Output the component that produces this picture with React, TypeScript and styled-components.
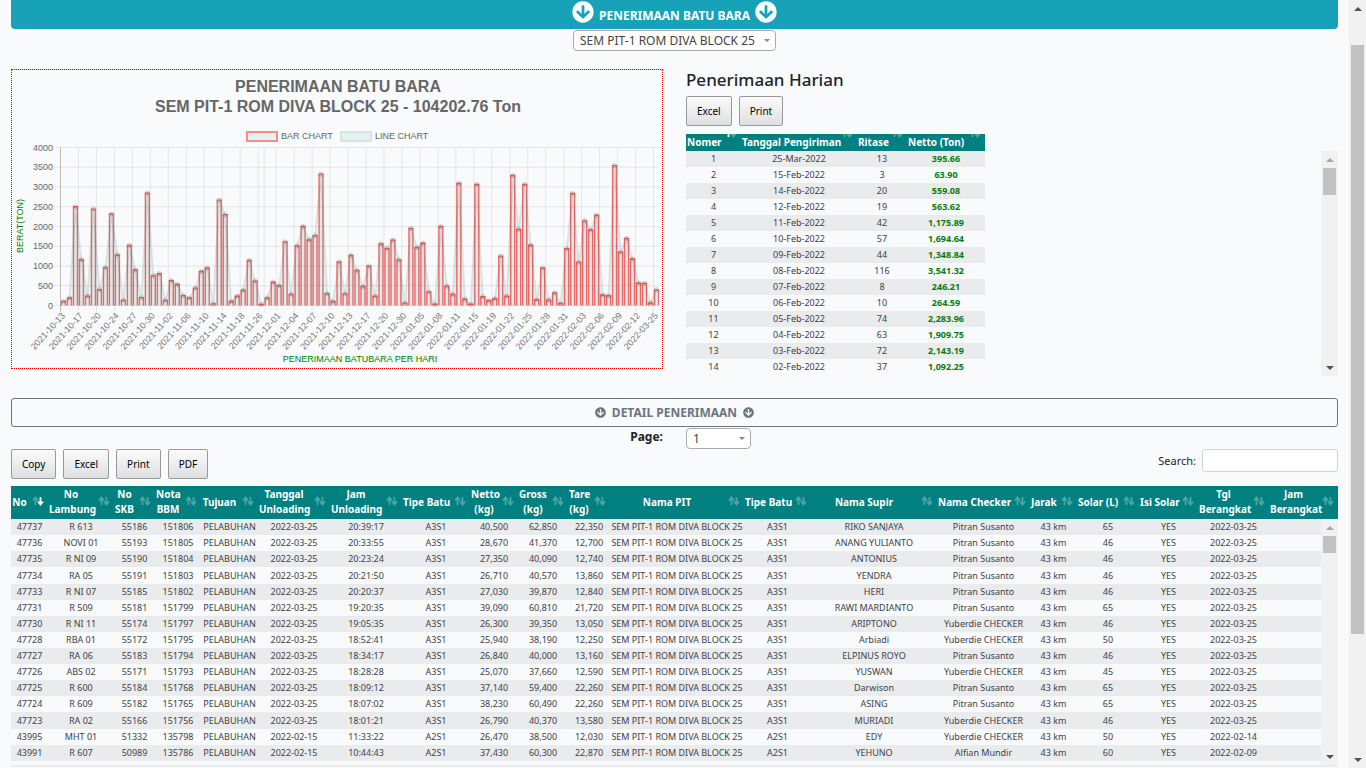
import React from "react";
import styled, { createGlobalStyle, css } from "styled-components";
import { FaArrowCircleDown } from "react-icons/fa";

const TEAL = "#008080";
const PAGE_BG = "#f8fafc";
const UI_FONT = '"Noto Sans", "Open Sans", sans-serif';

const GlobalStyle = createGlobalStyle`
  * { box-sizing: border-box; }
  body {
    margin: 0;
    background: ${PAGE_BG};
    color: #212529;
    font-family: ${UI_FONT};
    font-size: 12px;
  }
  button, input, select { font-family: inherit; margin: 0; }
`;

const Shell = styled.div`
  display: flex;
  height: 100vh;
  overflow: hidden;
`;

const Main = styled.main`
  flex: 1;
  min-width: 0;
  display: flex;
  flex-direction: column;
  padding: 0 11px;
`;

const Banner = styled.header`
  display: flex;
  align-items: flex-start;
  justify-content: center;
  gap: 5px;
  height: 29px;
  padding-top: 1px;
  background: #17a2b8;
  color: #fff;
  border-radius: 0 0 4px 4px;
  svg { width: 22px; height: 22px; }
`;

const BannerTitle = styled.h1`
  margin: 0;
  padding-top: 6px;
  font-size: 12px;
  line-height: 18px;
  font-weight: 700;
`;

const CenterRow = styled.div`
  display: flex;
  justify-content: center;
  padding-top: 1px;
`;

const SelectBox = styled.div<{ $width: number }>`
  position: relative;
  width: ${(p) => p.$width}px;
  height: 21px;
  &::after {
    content: "";
    position: absolute;
    right: 6px;
    top: 9px;
    border: 3px solid transparent;
    border-top-color: #888;
    border-bottom-width: 0;
    pointer-events: none;
  }
`;

const Select = styled.select`
  appearance: none;
  width: 100%;
  height: 100%;
  padding: 0 18px 0 6px;
  border: 1px solid #aaa;
  border-radius: 4px;
  background: #fff;
  color: #444;
  font-size: 12px;
`;

const Columns = styled.section`
  display: grid;
  grid-template-columns: 1fr 1fr;
  gap: 23px;
  margin-top: 18px;
`;

const ChartFrame = styled.div`
  border: 1px dotted #f00;
  align-self: start;
  svg { display: block; width: 100%; height: auto; }
`;

const DailyTitle = styled.h2`
  margin: 0 0 5px;
  font-size: 17px;
  line-height: 22px;
  font-weight: 500;
`;

const ButtonRow = styled.div`
  display: flex;
  gap: 7px;
`;

const ToolButton = styled.button`
  height: 30px;
  padding: 0 10px;
  border: 1px solid #999;
  border-radius: 2px;
  background: linear-gradient(#fbfbfc, #dedfe1);
  color: #000;
  font-size: 10px;
`;

const DailyArea = styled.div`
  position: relative;
  height: 242px;
  margin-top: 8px;
  overflow: hidden;
`;

const DataTable = styled.table`
  border-collapse: collapse;
  table-layout: fixed;
  font-size: 9px;
  line-height: 16px;
  text-align: center;
  white-space: nowrap;
  td, th { padding: 0; overflow: visible; }
  th {
    position: relative;
    padding: 0 21px 1px 1px;
    background: ${TEAL};
    color: #fff;
    font-size: 10px;
    line-height: 15px;
    font-weight: 700;
  }
  td { height: 16px; color: #3d4247; }
  tbody tr:nth-child(odd) { background: #eaebed; }
`;

const DailyTable = styled(DataTable)`
  width: 299px;
  th { height: 17px; }
`;

const DetailTable = styled(DataTable)`
  width: 100%;
  th { height: 33px; }
  tbody tr:nth-child(9n + 4) td { height: 17px; }
`;

const Netto = styled.td`
  && { color: #0b7a0b; font-weight: 700; }
`;

const SortMark = styled.svg<{ $clipped?: boolean }>`
  position: absolute;
  right: 4px;
  width: 12px;
  height: 10px;
  top: ${(p) => (p.$clipped ? "-6px" : "10px")};
  fill: none;
  stroke: #fff;
  stroke-width: 1.8;
`;

const DetailBar = styled.button`
  display: flex;
  align-items: center;
  justify-content: center;
  gap: 6px;
  height: 29px;
  margin-top: 22px;
  border: 1px solid #6c757d;
  border-radius: 3px;
  background: transparent;
  color: #6c757d;
  font-size: 12px;
  font-weight: 700;
  svg { width: 11px; height: 11px; }
`;

const PageRow = styled.div`
  display: grid;
  grid-template-columns: 1fr 1fr;
  gap: 23px;
  padding-top: 1px;
`;

const PageLabel = styled.label`
  justify-self: end;
  font-size: 12px;
  line-height: 18px;
  font-weight: 700;
`;

const Toolbar = styled.div`
  display: flex;
  justify-content: space-between;
  align-items: flex-start;
`;

const SearchLabel = styled.label`
  display: flex;
  align-items: center;
  gap: 6px;
  font-size: 11px;
`;

const SearchInput = styled.input`
  width: 136px;
  height: 23px;
  border: 1px solid #ced4da;
  border-radius: 3px;
  background: #fff;
`;

const DetailArea = styled.div`
  position: relative;
  flex: 1;
  min-height: 0;
  margin: 7px 0 1px;
  overflow: hidden;
  border-bottom: 2px solid #e9eaec;
`;

const Track = styled.div<{ $over?: number }>`
  flex: none;
  display: flex;
  flex-direction: column;
  width: 17px;
  background: #f1f1f1;
  ${(p) =>
    p.$over !== undefined &&
    css`
      position: absolute;
      right: 0;
      top: ${p.$over}px;
      bottom: 0;
    `}
`;

const Arrow = styled.span<{ $down?: boolean; $dim?: boolean }>`
  height: 17px;
  display: grid;
  place-items: center;
  &::before {
    content: "";
    border: 4px solid transparent;
    ${(p) =>
      p.$down
        ? "border-bottom-width: 0; border-top-color: #505050;"
        : `border-top-width: 0; border-bottom-color: ${p.$dim ? "#a3a3a3" : "#505050"};`}
  }
`;

const Groove = styled.div<{ $before: number; $size: number; $after: number }>`
  flex: 1;
  display: grid;
  padding: 0 2px;
  grid-template-rows: ${(p) => `${p.$before}fr ${p.$size}fr ${p.$after}fr`};
  &::before { content: ""; }
`;

const Thumb = styled.div`
  background: #c1c1c1;
`;

interface ScrollbarProps {
  over?: number;
  dim?: boolean;
  before: number;
  size: number;
  after: number;
}

function Scrollbar({ over, dim, before, size, after }: ScrollbarProps) {
  return (
    <Track $over={over} aria-hidden="true">
      <Arrow $dim={dim} />
      <Groove $before={before} $size={size} $after={after}>
        <Thumb />
      </Groove>
      <Arrow $down />
    </Track>
  );
}

function Sort({ active, clipped }: { active?: "up" | "down"; clipped?: boolean }) {
  return (
    <SortMark viewBox="0 0 12 10" $clipped={clipped} aria-hidden="true">
      <path d="M3.5 9V1.5M1 4.5 3.5 1.5 6 4.5" opacity={active === "up" ? 1 : 0.3} />
      <path d="M8.5 1V8.5M6 5.5 8.5 8.5 11 5.5" opacity={active === "down" ? 1 : 0.3} />
    </SortMark>
  );
}

const tonnage = [
  100, 190, 2500, 1160, 235, 2440, 400, 960, 2315, 1280, 130, 1520, 900, 200, 2844, 750, 805, 130, 630, 530,
  250, 190, 440, 860, 950, 40, 2667, 2300, 100, 235, 385, 1140, 615, 25, 190, 590, 500, 1610, 280, 1510,
  2000, 1660, 1770, 3325, 300, 100, 1100, 295, 1265, 885, 480, 995, 235, 1560, 1440, 1655, 1155, 60, 1950, 1465,
  1575, 345, 30, 2000, 490, 280, 3090, 160, 30, 3063, 220, 120, 170, 1250, 235, 3290, 1925, 3063, 1525, 145,
  950, 135, 320, 50, 1435, 2835, 1092, 2143, 1910, 2284, 265, 246, 3541, 1349, 1695, 1176, 564, 559, 64, 396,
];

const chartDates = [
  "2021-10-13", "2021-10-17", "2021-10-20", "2021-10-24", "2021-10-27", "2021-10-30", "2021-11-02", "2021-11-06",
  "2021-11-10", "2021-11-14", "2021-11-18", "2021-11-26", "2021-12-01", "2021-12-04", "2021-12-07", "2021-12-10",
  "2021-12-13", "2021-12-17", "2021-12-20", "2021-12-30", "2022-01-05", "2022-01-08", "2022-01-11", "2022-01-15",
  "2022-01-19", "2022-01-22", "2022-01-25", "2022-01-28", "2022-01-31", "2022-02-03", "2022-02-06", "2022-02-09",
  "2022-02-12", "2022-03-25",
];

const PLOT = { left: 48.5, right: 647.5, top: 77.5, bottom: 235.5 };
const STEP = (PLOT.right - PLOT.left) / tonnage.length;
const yOf = (v: number) => PLOT.bottom - (v / 4000) * (PLOT.bottom - PLOT.top);
const xOf = (i: number) => PLOT.left + (i + 0.5) * STEP;

function TonnageChart() {
  const points = tonnage.map((v, i) => `${xOf(i)},${yOf(v)}`).join(" ");
  const area = `${xOf(0)},${PLOT.bottom} ${points} ${xOf(tonnage.length - 1)},${PLOT.bottom}`;
  const levels = [0, 500, 1000, 1500, 2000, 2500, 3000, 3500, 4000];
  return (
    <svg
      viewBox="0 0 650 298"
      role="img"
      aria-label="Penerimaan batubara per hari"
      fontFamily='"Liberation Sans", Arial, sans-serif'
      fontSize="9"
      fill="#666"
    >
      <g fontSize="16" fontWeight="700" textAnchor="middle">
        <text x="326" y="22">PENERIMAAN BATU BARA</text>
        <text x="326" y="42">SEM PIT-1 ROM DIVA BLOCK 25 - 104202.76 Ton</text>
      </g>
      <rect x="235" y="62" width="30" height="9" fill="#e3f3ef" stroke="#f88" strokeWidth="2" />
      <text x="269" y="69">BAR CHART</text>
      <rect x="329" y="62" width="30" height="9" fill="#e3f3ef" stroke="#dbe3e2" strokeWidth="2" />
      <text x="363" y="69">LINE CHART</text>

      <g stroke="#000" strokeOpacity="0.08">
        {levels.map((v) => (
          <line key={v} x1={PLOT.left - 6} x2={PLOT.right} y1={yOf(v)} y2={yOf(v)} />
        ))}
        {chartDates.map((d, i) => (
          <line
            key={d}
            x1={PLOT.left + i * 3 * STEP}
            x2={PLOT.left + i * 3 * STEP}
            y1={PLOT.top}
            y2={PLOT.bottom + 6}
            strokeOpacity={i === 0 ? 0.25 : 0.08}
          />
        ))}
        <line x1={PLOT.left + 34 * STEP} x2={PLOT.left + 34 * STEP} y1={PLOT.top} y2={PLOT.bottom + 6} />
      </g>
      {levels.map((v) => (
        <text key={v} x="41" y={yOf(v) + 3} textAnchor="end">
          {v}
        </text>
      ))}

      <polygon points={area} fill="#00a080" fillOpacity="0.06" />
      <polyline points={points} fill="none" stroke="#206050" strokeOpacity="0.12" strokeWidth="2" />
      {tonnage.map((v, i) => (
        <circle key={i} cx={xOf(i)} cy={yOf(v)} r="2.6" fill="#205545" fillOpacity="0.2" />
      ))}
      {tonnage.map((v, i) => (
        <path
          key={i}
          d={`M${xOf(i) - 2} ${PLOT.bottom}V${yOf(v)}H${xOf(i) + 2}V${PLOT.bottom}`}
          fill="#00a080"
          fillOpacity="0.08"
          stroke="#f51414"
          strokeOpacity="0.62"
          strokeWidth="1.4"
        />
      ))}

      {chartDates.map((d, i) => (
        <text
          key={d}
          fill="#777"
          textAnchor="end"
          transform={`translate(${PLOT.left + (i * 3 + 0.5) * STEP + 2} 246) rotate(-48)`}
        >
          {d}
        </text>
      ))}
      <text x="348" y="292" textAnchor="middle" fill="#008000">
        PENERIMAAN BATUBARA PER HARI
      </text>
      <text transform="translate(11 156) rotate(-90)" textAnchor="middle" fill="#008000">
        BERAT(TON)
      </text>
    </svg>
  );
}

const dailyHeads = ["Nomer", "Tanggal Pengiriman", "Ritase", "Netto (Ton)"];
const dailyWidths = [55, 116, 50, 78];
const daily: [string, string, string][] = [
  ["25-Mar-2022", "13", "395.66"],
  ["15-Feb-2022", "3", "63.90"],
  ["14-Feb-2022", "20", "559.08"],
  ["12-Feb-2022", "19", "563.62"],
  ["11-Feb-2022", "42", "1,175.89"],
  ["10-Feb-2022", "57", "1,694.64"],
  ["09-Feb-2022", "44", "1,348.84"],
  ["08-Feb-2022", "116", "3,541.32"],
  ["07-Feb-2022", "8", "246.21"],
  ["06-Feb-2022", "10", "264.59"],
  ["05-Feb-2022", "74", "2,283.96"],
  ["04-Feb-2022", "63", "1,909.75"],
  ["03-Feb-2022", "72", "2,143.19"],
  ["02-Feb-2022", "37", "1,092.25"],
];

const detailHeads = [
  "No", "No|Lambung", "No|SKB", "Nota|BBM", "Tujuan", "Tanggal|Unloading", "Jam|Unloading", "Tipe Batu",
  "Netto|(kg)", "Gross|(kg)", "Tare|(kg)", "Nama PIT", "Tipe Batu", "Nama Supir", "Nama Checker", "Jarak",
  "Solar (L)", "Isi Solar", "Tgl|Berangkat", "Jam|Berangkat",
];
const detailWidths = [37, 66, 41, 46, 57, 72, 72, 68, 48, 50, 42, 134, 67, 126, 93, 47, 62, 59, 71, 52, 17];

// no, lambung, skb, nota, unloading date, time, type, netto, gross, tare, driver, checker, solar, departure
const detail = [
  "47737;R 613;55186;151806;2022-03-25;20:39:17;A3S1;40,500;62,850;22,350;RIKO SANJAYA;Pitran Susanto;65;2022-03-25",
  "47736;NOVI 01;55193;151805;2022-03-25;20:33:55;A3S1;28,670;41,370;12,700;ANANG YULIANTO;Pitran Susanto;46;2022-03-25",
  "47735;R NI 09;55190;151804;2022-03-25;20:23:24;A3S1;27,350;40,090;12,740;ANTONIUS;Pitran Susanto;46;2022-03-25",
  "47734;RA 05;55191;151803;2022-03-25;20:21:50;A3S1;26,710;40,570;13,860;YENDRA;Pitran Susanto;46;2022-03-25",
  "47733;R NI 07;55185;151802;2022-03-25;20:20:37;A3S1;27,030;39,870;12,840;HERI;Pitran Susanto;46;2022-03-25",
  "47731;R 509;55181;151799;2022-03-25;19:20:35;A3S1;39,090;60,810;21,720;RAWI MARDIANTO;Pitran Susanto;65;2022-03-25",
  "47730;R NI 11;55174;151797;2022-03-25;19:05:35;A3S1;26,300;39,350;13,050;ARIPTONO;Yuberdie CHECKER;46;2022-03-25",
  "47728;RBA 01;55172;151795;2022-03-25;18:52:41;A3S1;25,940;38,190;12,250;Arbiadi;Yuberdie CHECKER;50;2022-03-25",
  "47727;RA 06;55183;151794;2022-03-25;18:34:17;A3S1;26,840;40,000;13,160;ELPINUS ROYO;Pitran Susanto;46;2022-03-25",
  "47726;ABS 02;55171;151793;2022-03-25;18:28:28;A3S1;25,070;37,660;12,590;YUSWAN;Yuberdie CHECKER;45;2022-03-25",
  "47725;R 600;55184;151768;2022-03-25;18:09:12;A3S1;37,140;59,400;22,260;Darwison;Pitran Susanto;65;2022-03-25",
  "47724;R 609;55182;151765;2022-03-25;18:07:02;A3S1;38,230;60,490;22,260;ASING;Pitran Susanto;65;2022-03-25",
  "47723;RA 02;55166;151756;2022-03-25;18:01:21;A3S1;26,790;40,370;13,580;MURIADI;Yuberdie CHECKER;46;2022-03-25",
  "43995;MHT 01;51332;135798;2022-02-15;11:33:22;A2S1;26,470;38,500;12,030;EDY;Yuberdie CHECKER;50;2022-02-14",
  "43991;R 607;50989;135786;2022-02-15;10:44:43;A2S1;37,430;60,300;22,870;YEHUNO;Alfian Mundir;60;2022-02-09",
].map((line) => {
  const c = line.split(";");
  return [
    c[0], c[1], c[2], c[3], "PELABUHAN", c[4], c[5], c[6], c[7], c[8], c[9], "SEM PIT-1 ROM DIVA BLOCK 25",
    c[6], c[10], c[11], "43 km", c[12], "YES", c[13], "",
  ];
});

function ColGroup({ widths }: { widths: number[] }) {
  return (
    <colgroup>
      {widths.map((w, i) => (
        <col key={i} width={w} />
      ))}
    </colgroup>
  );
}

export default function App() {
  return (
    <Shell>
      <GlobalStyle />
      <Main>
        <Banner>
          <FaArrowCircleDown />
          <BannerTitle>PENERIMAAN BATU BARA</BannerTitle>
          <FaArrowCircleDown />
        </Banner>
        <CenterRow>
          <SelectBox $width={203}>
            <Select aria-label="Nama PIT">
              <option>SEM PIT-1 ROM DIVA BLOCK 25</option>
            </Select>
          </SelectBox>
        </CenterRow>

        <Columns>
          <ChartFrame>
            <TonnageChart />
          </ChartFrame>
          <div>
            <DailyTitle>Penerimaan Harian</DailyTitle>
            <ButtonRow>
              <ToolButton>Excel</ToolButton>
              <ToolButton>Print</ToolButton>
            </ButtonRow>
            <DailyArea>
              <DailyTable>
                <ColGroup widths={dailyWidths} />
                <thead>
                  <tr>
                    {dailyHeads.map((h, i) => (
                      <th key={h} scope="col">
                        {h}
                        <Sort clipped active={i === 0 ? "up" : undefined} />
                      </th>
                    ))}
                  </tr>
                </thead>
                <tbody>
                  {daily.map(([date, trips, net], i) => (
                    <tr key={date}>
                      <td>{i + 1}</td>
                      <td>{date}</td>
                      <td>{trips}</td>
                      <Netto>{net}</Netto>
                    </tr>
                  ))}
                </tbody>
              </DailyTable>
              <Scrollbar over={17} dim before={0} size={27} after={164} />
            </DailyArea>
          </div>
        </Columns>

        <DetailBar>
          <FaArrowCircleDown />
          <span>DETAIL PENERIMAAN</span>
          <FaArrowCircleDown />
        </DetailBar>
        <PageRow>
          <PageLabel htmlFor="page">Page:</PageLabel>
          <SelectBox $width={65}>
            <Select id="page">
              <option>1</option>
            </Select>
          </SelectBox>
        </PageRow>
        <Toolbar>
          <ButtonRow>
            <ToolButton>Copy</ToolButton>
            <ToolButton>Excel</ToolButton>
            <ToolButton>Print</ToolButton>
            <ToolButton>PDF</ToolButton>
          </ButtonRow>
          <SearchLabel>
            Search:
            <SearchInput type="search" />
          </SearchLabel>
        </Toolbar>
        <DetailArea>
          <DetailTable>
            <ColGroup widths={detailWidths} />
            <thead>
              <tr>
                {detailHeads.map((h, i) => {
                  const [first, second] = h.split("|");
                  return (
                    <th key={i} scope="col" colSpan={i === detailHeads.length - 1 ? 2 : 1}>
                      {first}
                      {second && <br />}
                      {second}
                      <Sort active={i === 0 ? "down" : undefined} />
                    </th>
                  );
                })}
              </tr>
            </thead>
            <tbody>
              {detail.map((row) => (
                <tr key={row[0]}>
                  {row.map((cell, i) => (
                    <td key={i}>{cell}</td>
                  ))}
                  <td />
                </tr>
              ))}
            </tbody>
          </DetailTable>
          <Scrollbar over={33} dim before={0} size={17} after={195} />
        </DetailArea>
      </Main>
      <Scrollbar before={28} size={589} after={117} />
    </Shell>
  );
}
